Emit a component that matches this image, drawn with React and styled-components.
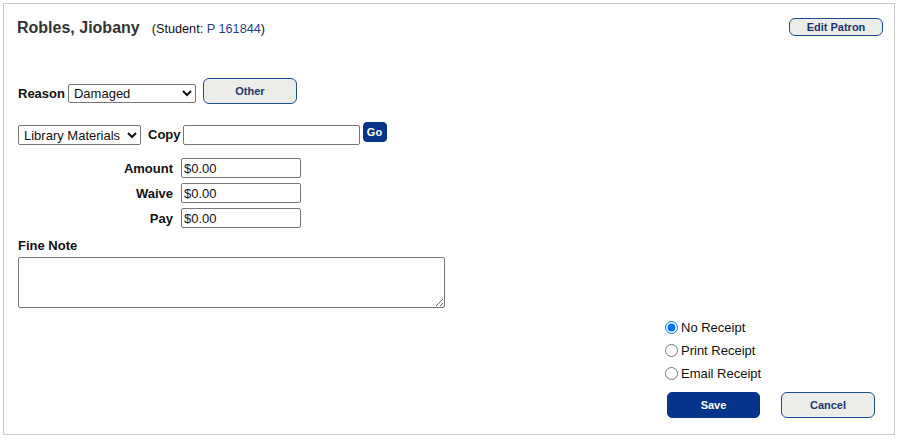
import styled, { createGlobalStyle } from "styled-components";

const GlobalStyle = createGlobalStyle`
  body {
    margin: 0;
    background: #fff;
    font-family: "Liberation Sans", Arial, sans-serif;
    color: #111;
  }
`;

const Panel = styled.div`
  margin: 3px;
  width: 892px;
  height: 432px;
  box-sizing: border-box;
  border: 1px solid #c9c9c9;
  padding: 0 11px 0 14px;
  display: flex;
  flex-direction: column;
`;

const Header = styled.div`
  display: flex;
  justify-content: space-between;
  align-items: flex-start;
  padding-top: 14px;
`;

const Title = styled.div`
  display: flex;
  align-items: baseline;
  line-height: 20px;
`;

const Name = styled.span`
  font-size: 16px;
  font-weight: bold;
  color: #333;
  margin-left: -1px;
`;

const Meta = styled.span`
  font-size: 12.7px;
  color: #111;
  margin-left: 12px;
`;

const Id = styled.span`
  color: #1d3f8f;
`;

const LightButton = styled.button`
  width: ${(p) => p.w}px;
  height: ${(p) => p.h}px;
  border: 1px solid #1f4b93;
  border-radius: 6px;
  background: #ecece9;
  color: #1a3670;
  font-family: "Liberation Sans", Arial, sans-serif;
  font-size: 11px;
  font-weight: bold;
  padding: 0;
  cursor: pointer;
`;

const DarkButton = styled.button`
  width: ${(p) => p.w}px;
  height: ${(p) => p.h}px;
  border: 1px solid #06348c;
  border-radius: ${(p) => p.r || 5}px;
  background: #06348c;
  color: #fff;
  font-family: "Liberation Sans", Arial, sans-serif;
  font-size: 11px;
  font-weight: bold;
  padding: 0;
  cursor: pointer;
`;

const ReasonRow = styled.div`
  display: flex;
  align-items: flex-end;
  margin-top: 39px;
`;

const Label = styled.span`
  font-size: 13px;
  font-weight: bold;
  line-height: 19px;
  color: #111;
`;

const Select = styled.select`
  width: ${(p) => p.w}px;
  height: ${(p) => p.h}px;
  box-sizing: border-box;
  border: 1px solid #767676;
  border-radius: 2px;
  background: #fff;
  font-family: "Liberation Sans", Arial, sans-serif;
  font-size: 13px;
  color: #111;
  padding: 0 0 0 1px;
`;

const CopyRow = styled.div`
  display: flex;
  align-items: flex-start;
  margin-top: 18px;
`;

const TextInput = styled.input`
  width: ${(p) => p.w}px;
  height: 20px;
  box-sizing: border-box;
  border: 1px solid #767676;
  border-radius: 2px;
  font-family: "Liberation Sans", Arial, sans-serif;
  font-size: 13px;
  color: #111;
  padding: 0 2px;
`;

const AmountGrid = styled.div`
  display: grid;
  grid-template-columns: 155px 120px;
  column-gap: 8px;
  row-gap: 5px;
  margin-top: 13px;
  align-items: center;
`;

const RightLabel = styled(Label)`
  text-align: right;
`;

const NoteLabel = styled(Label)`
  margin-top: 10px;
  line-height: 16px;
`;

const NoteArea = styled.textarea`
  width: 427px;
  height: 51px;
  box-sizing: border-box;
  margin-top: 3px;
  border: 1px solid #767676;
  border-radius: 2px;
  font-family: "Liberation Sans", Arial, sans-serif;
  font-size: 13px;
`;

const Bottom = styled.div`
  display: flex;
  justify-content: flex-end;
  padding-right: 7px;
`;

const SideColumn = styled.div`
  width: 211px;
  margin-top: 8px;
  display: flex;
  flex-direction: column;
`;

const RadioRow = styled.label`
  display: flex;
  align-items: center;
  height: 23px;
  font-size: 13px;
  color: #111;
`;

const Radio = styled.input`
  width: 13px;
  height: 13px;
  margin: 0 3px 0 0;
`;

const ButtonRow = styled.div`
  display: flex;
  gap: 21px;
  margin-top: 7px;
  padding-left: 2px;
`;

export default function App() {
  return (
    <>
      <GlobalStyle />
      <Panel>
        <Header>
          <Title>
            <Name>Robles, Jiobany</Name>
            <Meta>
              (Student: <Id>P 161844</Id>)
            </Meta>
          </Title>
          <LightButton w={94} h={18}>
            Edit Patron
          </LightButton>
        </Header>

        <ReasonRow>
          <Label style={{ marginBottom: 1 }}>Reason</Label>
          <Select w={128} h={19} style={{ marginLeft: 3, marginBottom: 1 }} defaultValue="Damaged">
            <option>Damaged</option>
            <option>Lost</option>
          </Select>
          <LightButton w={94} h={26} style={{ marginLeft: 7 }}>
            Other
          </LightButton>
        </ReasonRow>

        <CopyRow>
          <Select w={123} h={20} style={{ marginTop: 3 }} defaultValue="Library Materials">
            <option>Library Materials</option>
          </Select>
          <Label style={{ marginLeft: 7, marginTop: 3, lineHeight: "20px" }}>Copy</Label>
          <TextInput w={177} style={{ marginLeft: 2, marginTop: 3 }} />
          <DarkButton w={24} h={20} r={4} style={{ marginLeft: 3 }}>
            Go
          </DarkButton>
        </CopyRow>

        <AmountGrid>
          <RightLabel>Amount</RightLabel>
          <TextInput w={120} defaultValue="$0.00" />
          <RightLabel>Waive</RightLabel>
          <TextInput w={120} defaultValue="$0.00" />
          <RightLabel>Pay</RightLabel>
          <TextInput w={120} defaultValue="$0.00" />
        </AmountGrid>

        <NoteLabel>Fine Note</NoteLabel>
        <NoteArea />

        <Bottom>
          <SideColumn>
            <RadioRow>
              <Radio type="radio" name="receipt" defaultChecked />
              No Receipt
            </RadioRow>
            <RadioRow>
              <Radio type="radio" name="receipt" />
              Print Receipt
            </RadioRow>
            <RadioRow>
              <Radio type="radio" name="receipt" />
              Email Receipt
            </RadioRow>
            <ButtonRow>
              <DarkButton w={93} h={26}>Save</DarkButton>
              <LightButton w={94} h={26}>Cancel</LightButton>
            </ButtonRow>
          </SideColumn>
        </Bottom>
      </Panel>
    </>
  );
}
